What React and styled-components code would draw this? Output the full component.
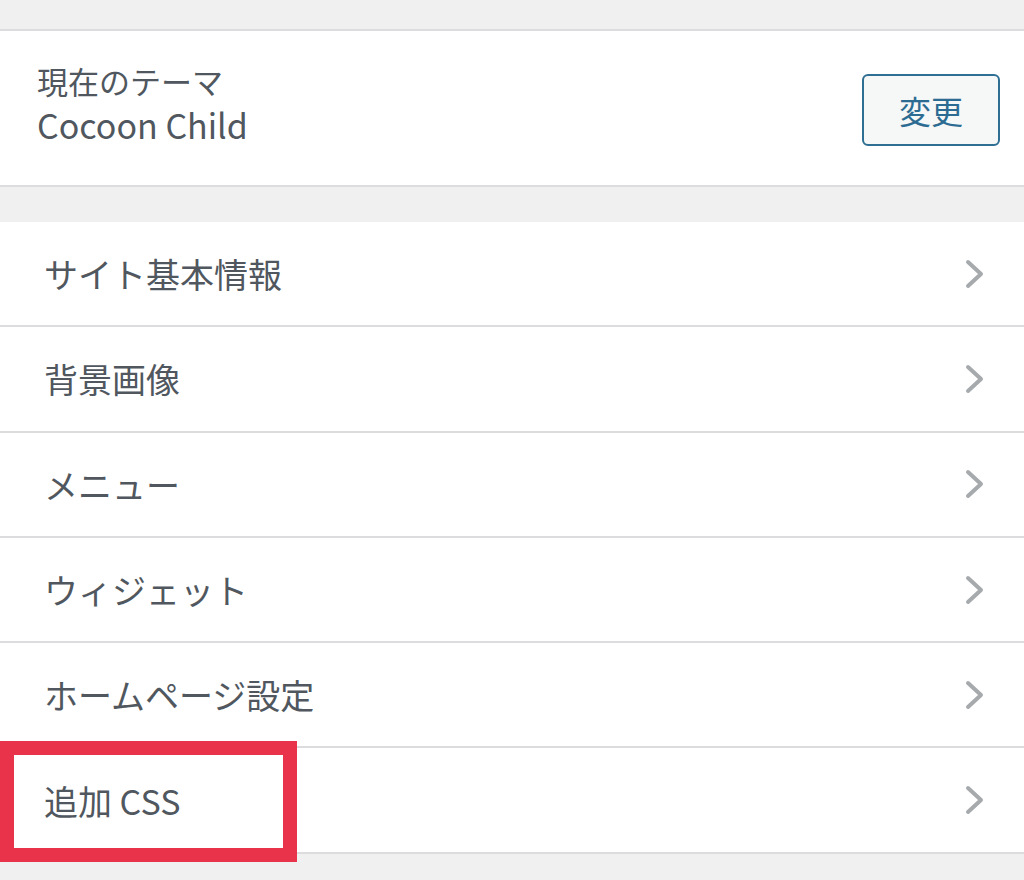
import styled, { createGlobalStyle } from 'styled-components'

const GlobalStyle = createGlobalStyle`
  html, body {
    margin: 0;
    padding: 0;
    background: #f0f0f1;
  }
  body {
    font-family: "Noto Sans CJK JP", "Noto Sans", sans-serif;
    color: #50575e;
  }
`

const menuItems = [
  "サイト基本情報",
  "背景画像",
  "メニュー",
  "ウィジェット",
  "ホームページ設定",
  "追加 CSS",
]

function Chevron() {
  return (
    <svg width="22" height="32" viewBox="0 0 22 32">
      <polyline
        points="4,4 17,16 4,28"
        fill="none"
        stroke="#a7aaad"
        strokeWidth="4"
        strokeLinecap="round"
        strokeLinejoin="round"
      />
    </svg>
  )
}

function App() {
  return (
    <Page>
      <GlobalStyle />
      <ThemePanel>
        <ThemeInfo>
          <ThemeLabel>現在のテーマ</ThemeLabel>
          <ThemeName>Cocoon Child</ThemeName>
        </ThemeInfo>
        <ChangeButton>変更</ChangeButton>
      </ThemePanel>
      <Menu>
        {menuItems.map((label, i) => (
          <MenuRow key={i}>
            <MenuLabel>{label}</MenuLabel>
            <Chevron />
            {i === menuItems.length - 1 && <Highlight />}
          </MenuRow>
        ))}
      </Menu>
    </Page>
  )
}

const Page = styled.div`
  min-height: 880px;
  padding-top: 29px;
  box-sizing: border-box;
  background: #f0f0f1;
`

const ThemePanel = styled.div`
  display: flex;
  align-items: center;
  justify-content: space-between;
  height: 154px;
  padding: 0 24px 0 37px;
  background: #fff;
  border-top: 2px solid #dcdcde;
  border-bottom: 2px solid #dcdcde;
`

const ThemeInfo = styled.div`
  display: flex;
  flex-direction: column;
  margin-top: -8px;
`

const ThemeLabel = styled.div`
  font-size: 31px;
  line-height: 42px;
  color: #50575e;
`

const ThemeName = styled.div`
  font-size: 34px;
  line-height: 46px;
  color: #50575e;
`

const ChangeButton = styled.button`
  width: 138px;
  height: 72px;
  margin-top: 3px;
  border: 2px solid #2f6f94;
  border-radius: 6px;
  background: #f6f7f7;
  color: #2c6c92;
  font-family: "Noto Sans CJK JP", sans-serif;
  font-size: 32px;
  padding: 0;
`

const Menu = styled.div`
  margin-top: 35px;
  background: #fff;
`

const MenuRow = styled.div`
  position: relative;
  display: flex;
  align-items: center;
  justify-content: space-between;
  height: 103.3px;
  padding: 0 38px 0 44px;
  border-bottom: 2px solid #dcdcde;
`

const MenuLabel = styled.span`
  font-size: 34px;
  color: #50575e;
`

const Highlight = styled.div`
  position: absolute;
  left: 0;
  top: -7px;
  width: 297px;
  height: 121px;
  box-sizing: border-box;
  border: 14px solid #e8334a;
  pointer-events: none;
`

export default App
